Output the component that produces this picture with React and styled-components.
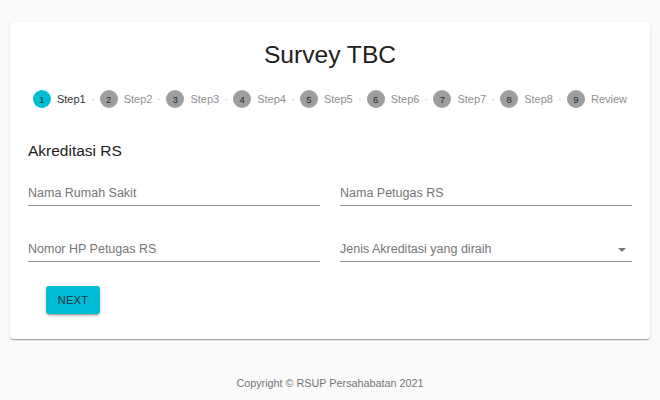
import React from 'react'
import styled, { createGlobalStyle } from 'styled-components'

const GlobalStyle = createGlobalStyle`
  body {
    margin: 0;
    background: #fafafa;
    font-family: "Liberation Sans", Arial, sans-serif;
  }
`

const Page = styled.div`
  width: 640px;
  margin: 0 auto;
  padding-top: 22px;
`

const Card = styled.div`
  background: #fff;
  border-radius: 4px;
  box-shadow: 0 2px 1px -1px rgba(0,0,0,0.2), 0 1px 1px 0 rgba(0,0,0,0.14), 0 1px 3px 0 rgba(0,0,0,0.12);
  padding: 17px 18px 25px;
`

const Title = styled.h1`
  margin: 0;
  font-size: 24.6px;
  line-height: 32px;
  font-weight: 400;
  color: #212121;
  text-align: center;
`

const Stepper = styled.div`
  display: flex;
  justify-content: center;
  align-items: center;
  margin-top: 19px;
  height: 18px;
`

const Step = styled.div`
  display: flex;
  align-items: center;
  gap: 6px;
`

const StepIcon = styled.span`
  width: 18px;
  height: 18px;
  border-radius: 50%;
  background: ${p => (p.$active ? '#00bcd4' : '#9e9e9e')};
  color: #2a2a2a;
  font-size: 9.5px;
  display: flex;
  align-items: center;
  justify-content: center;
`

const StepLabel = styled.span`
  font-size: 11px;
  color: ${p => (p.$active ? '#333' : '#8f8f8f')};
`

const Connector = styled.span`
  width: 2px;
  height: 1px;
  background: #d6d6d6;
  margin: 0 6px;
`

const Section = styled.h2`
  margin: 33px 0 0;
  font-size: 15.5px;
  line-height: 20px;
  font-weight: 400;
  color: #212121;
`

const Grid = styled.div`
  display: grid;
  grid-template-columns: 1fr 1fr;
  column-gap: 20px;
  row-gap: 24px;
  margin-top: 13px;
`

const Field = styled.div`
  height: 32px;
  box-sizing: border-box;
  display: flex;
  align-items: flex-end;
  justify-content: space-between;
  padding-bottom: 4px;
  border-bottom: 1px solid #949494;
  font-size: 12.5px;
  line-height: 16px;
  color: #757575;
`

const Arrow = styled.span`
  width: 0;
  height: 0;
  margin: 0 6px 5px 0;
  border-left: 4px solid transparent;
  border-right: 4px solid transparent;
  border-top: 4px solid #757575;
`

const Button = styled.button`
  margin: 24px 0 0 18px;
  width: 54px;
  height: 28px;
  border: 0;
  border-radius: 3px;
  background: #00bcd4;
  color: #14303a;
  font-family: inherit;
  font-size: 11px;
  letter-spacing: 0.3px;
  box-shadow: 0 3px 1px -2px rgba(0,0,0,0.2), 0 2px 2px 0 rgba(0,0,0,0.14), 0 1px 5px 0 rgba(0,0,0,0.12);
`

const Footer = styled.p`
  margin: 37px 0 0;
  text-align: center;
  font-size: 10.8px;
  line-height: 14px;
  color: #757575;
`

const steps = ['Step1', 'Step2', 'Step3', 'Step4', 'Step5', 'Step6', 'Step7', 'Step8', 'Review']

export default function App() {
  return (
    <>
      <GlobalStyle />
      <Page>
        <Card>
          <Title>Survey TBC</Title>
          <Stepper>
            {steps.map((s, i) => (
              <React.Fragment key={s}>
                {i > 0 && <Connector />}
                <Step>
                  <StepIcon $active={i === 0}>{i + 1}</StepIcon>
                  <StepLabel $active={i === 0}>{s}</StepLabel>
                </Step>
              </React.Fragment>
            ))}
          </Stepper>
          <Section>Akreditasi RS</Section>
          <Grid>
            <Field>Nama Rumah Sakit</Field>
            <Field>Nama Petugas RS</Field>
            <Field>Nomor HP Petugas RS</Field>
            <Field>
              Jenis Akreditasi yang diraih
              <Arrow />
            </Field>
          </Grid>
          <Button>NEXT</Button>
        </Card>
        <Footer>Copyright © RSUP Persahabatan 2021</Footer>
      </Page>
    </>
  )
}
